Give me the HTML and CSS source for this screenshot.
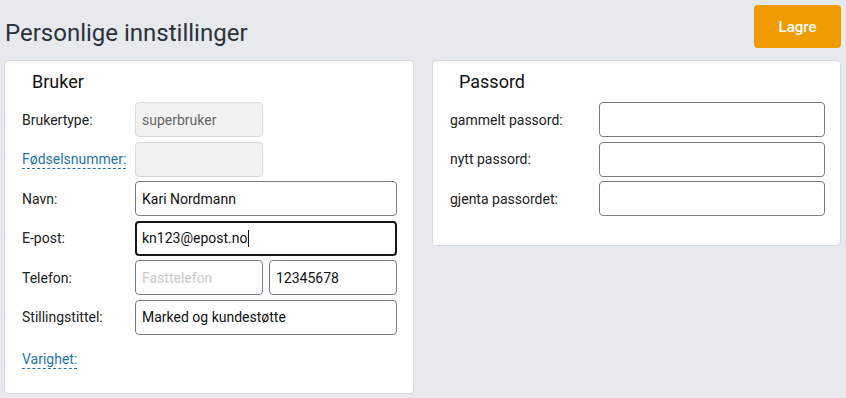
FILE: index.html
```html
<!DOCTYPE html>
<html lang="no">
<head>
<meta charset="utf-8">
<title>Personlige innstillinger</title>
<link rel="stylesheet" href="styles.css">
</head>
<body>
<div class="page">
  <header class="topbar">
    <h1 class="title">Personlige innstillinger</h1>
    <button class="save-btn" type="button">Lagre</button>
  </header>
  <main class="cards">
    <section class="card card-user">
      <h2 class="card-title">Bruker</h2>
      <div class="form form-user">
        <label class="label">Brukertype:</label>
        <input class="input half" type="text" value="superbruker" disabled>

        <label class="label link">Fødselsnummer:</label>
        <input class="input half" type="text" value="" disabled>

        <label class="label">Navn:</label>
        <input class="input" type="text" value="Kari Nordmann">

        <label class="label">E-post:</label>
        <div class="input focused"><span>kn123@epost.no</span><span class="caret"></span></div>

        <label class="label">Telefon:</label>
        <div class="pair">
          <input class="input" type="text" placeholder="Fasttelefon">
          <input class="input" type="text" value="12345678">
        </div>

        <label class="label">Stillingstittel:</label>
        <input class="input" type="text" value="Marked og kundestøtte">

        <label class="label link short">Varighet:</label>
        <div class="empty"></div>
      </div>
    </section>
    <section class="card card-pass">
      <h2 class="card-title">Passord</h2>
      <div class="form form-pass">
        <label class="label">gammelt passord:</label>
        <input class="input" type="password">

        <label class="label">nytt passord:</label>
        <input class="input" type="password">

        <label class="label">gjenta passordet:</label>
        <input class="input" type="password">
      </div>
    </section>
  </main>
</div>
</body>
</html>
```

FILE: styles.css
```css
* { box-sizing: border-box; }

html, body {
  margin: 0;
  padding: 0;
  background: #e6e9ee;
  font-family: Roboto, "Liberation Sans", Arial, sans-serif;
  color: #1d1f23;
}

.page {
  padding: 5px 5px 0 4px;
}

.topbar {
  display: flex;
  justify-content: space-between;
  align-items: flex-end;
}

.title {
  margin: 0 0 0 1px;
  font-size: 24px;
  font-weight: 400;
  line-height: 30px;
  color: #2b313b;
}

.save-btn {
  width: 87px;
  height: 43px;
  border: none;
  border-radius: 4px;
  background: #f09c00;
  color: #fff;
  font-family: inherit;
  font-size: 15px;
  font-weight: 500;
  padding: 0;
  margin-right: 0;
}

.cards {
  margin-top: 12px;
  display: grid;
  grid-template-columns: 410px 409px;
  gap: 18px;
  align-items: start;
}

.card {
  background: #fff;
  border: 1px solid #d7dade;
  border-radius: 4px;
  padding: 10px 16px 0 17px;
}

.card-user { height: 334px; }
.card-pass { height: 186px; }

.card-title {
  margin: 0 0 9px 10px;
  font-size: 18px;
  font-weight: 400;
  line-height: 22px;
  color: #111;
}

.card-pass .card-title { margin-left: 9px; }

.form {
  display: grid;
  row-gap: 4.6px;
  align-items: center;
}

.form-user { grid-template-columns: 113px 262px; }
.form-pass { grid-template-columns: 149px 226px; }

.label {
  font-size: 14px;
  line-height: 16px;
  color: #222;
  justify-self: start;
}

.label.link {
  color: #1f74a6;
  border-bottom: 1px dashed #1f74a6;
  padding-bottom: 1px;
  margin-top: 2px;
}

.label.short {
  margin-top: 11px;
}

.input {
  display: block;
  width: 100%;
  height: 35px;
  margin: 0;
  padding: 0 6px;
  border: 1px solid #767c86;
  border-radius: 4px;
  background: #fff;
  font-family: inherit;
  font-size: 14px;
  color: #111;
  outline: none;
}

.input::placeholder { color: #cacaca; }

.input.half { width: 128px; }

.input:disabled {
  background: #f2f2f2;
  border-color: #dadada;
  color: #666;
}

.input.focused {
  display: flex;
  align-items: center;
  border: 2px solid #161616;
  padding: 0 5px;
}

.caret {
  display: inline-block;
  width: 1px;
  height: 17px;
  background: #111;
  margin-left: 0;
}

.pair {
  display: grid;
  grid-template-columns: 128px 128px;
  gap: 6px;
}

.empty { height: 16px; }
```
